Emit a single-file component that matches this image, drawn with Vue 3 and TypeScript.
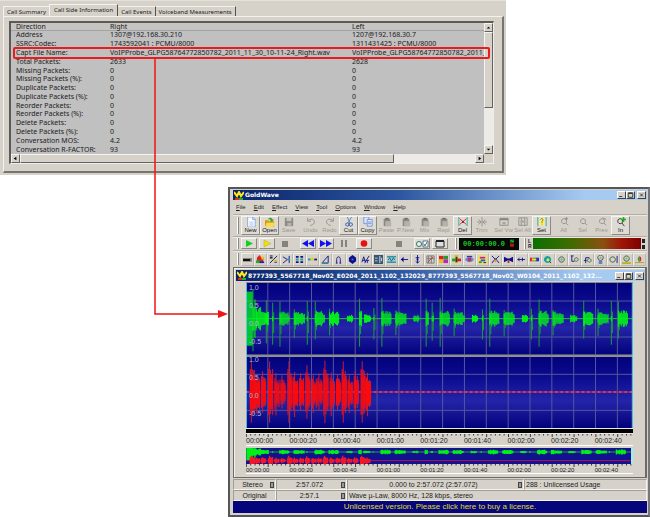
<script setup lang="ts">
type Shape = [d: string, color: string, kind?: 's']
interface Tool { label: string; on?: boolean; gap?: boolean; icon: Shape[] }
interface Burst { x: number; w: number; a: number; spike?: number; down?: number }

const tabs = ['Call Summary', 'Call Side Information', 'Call Events', 'Voiceband Measurements']
const file = 'VoIPProbe_GLPG58764772850782_2011_'
const rows: [string, string, string][] = [
  ['Address', '1307@192.168.30.210', '1207@192.168.30.7'],
  ['SSRC:Codec:', '1743592041 : PCMU/8000', '1311431425 : PCMU/8000'],
  ['Capt File Name:', file + '11_30_10-11-24_Right.wav', file],
  ['Total Packets:', '2633', '2628'],
  ['Missing Packets:', '0', '0'],
  ['Missing Packets (%):', '0', '0'],
  ['Duplicate Packets:', '0', '0'],
  ['Duplicate Packets (%):', '0', '0'],
  ['Reorder Packets:', '0', '0'],
  ['Reorder Packets (%):', '0', '0'],
  ['Delete Packets:', '0', '0'],
  ['Delete Packets (%):', '0', '0'],
  ['Conversation MOS:', '4.2', '4.2'],
  ['Conversation R-FACTOR:', '93', '93'],
]

const menus = ['File', 'Edit', 'Effect', 'View', 'Tool', 'Options', 'Window', 'Help']

const G = '#8c8a85'
const clip: Shape[] = [['M2 2h8v9H2z', G], ['M4 1h4v2H4z', '#6f6d69'], ['M4 5h7v6H4z', '#b5b2ab']]
const lens: Shape[] = [['M6 2a3 3 0 1 0 .1 0zM8 7l3 3', G, 's']]
const tools: Tool[] = [
  { label: 'New', on: true, icon: [['M2 0h6l3 3v9H2z', '#fff'], ['M2 0h6l3 3v9H2zM8 0v3h3', '#7f9fd8', 's'], ['M4 5h5v6H4z', '#cfe0ff']] },
  { label: 'Open', on: true, icon: [['M0 4h4l1 1h6v7H0z', '#d79a10'], ['M2 7h10l-2 5H0z', '#ffd94a'], ['M3 3c2-3 5-3 6 0h2L8 6 5 3h2c-1-1-2-1-4 0z', '#2faa2f']] },
  { label: 'Save', icon: [['M1 1h10v10H1z', G], ['M3 1h6v4H3z', '#c4c1ba'], ['M4 7h5v4H4z', '#b5b2ab']] },
  { label: 'Undo', gap: true, icon: [['M2 1v4h4M2 5c3-4 9-3 8 2-1 2-3 3-5 3', G, 's']] },
  { label: 'Redo', icon: [['M10 1v4H6M10 5C7 1 1 2 2 7c1 2 3 3 5 3', G, 's']] },
  { label: 'Cut', on: true, icon: [['M4 0l3 7M9 0L5 7', '#4b78b8', 's'], ['M4 7a2 2 0 1 0 .1 0zM8 7a2 2 0 1 0 .1 0z', '#123a9c', 's']] },
  { label: 'Copy', on: true, icon: [['M1 0h6v8H1z', '#dbe7ff'], ['M1 0h6v8H1z', '#6b8bd0', 's'], ['M5 3h6v8H5z', '#dbe7ff'], ['M5 3h6v8H5zM6 6h4M6 8h4', '#6b8bd0', 's']] },
  { label: 'Paste', icon: clip },
  { label: 'P.New', icon: clip },
  { label: 'Mix', icon: clip },
  { label: 'Repl', icon: clip },
  { label: 'Del', on: true, icon: [['M1 0v11M11 0v11', '#1aa7a0', 's'], ['M2 2l8 7M10 2L2 9', '#c01818', 's'], ['M5 5h2v2H5z', '#7a0000']] },
  { label: 'Trim', icon: [['M6 0v11M0 6h5M12 6H7M2 3l3 3-3 3M10 3L7 6l3 3', G, 's']] },
  { label: 'Sel Vw', gap: true, icon: [['M1 2h10v8H1z', G, 's'], ['M1 1h10v3H1z', G], ['M4 6h4v3H4z', '#aaa7a0']] },
  { label: 'Sel All', icon: [['M1 1h10v9H1zM4 1v9M8 1v9', G, 's'], ['M3 4h6v3H3z', '#aaa7a0']] },
  { label: 'Set', on: true, icon: [['M1 0v11M11 0v11', '#1aa7a0', 's'], ['M3 1h6v9H3z', '#ffef6a'], ['M4 3c1-2 4-1 3 1L6 5v2M6 8v1', '#5b6a10', 's']] },
  { label: 'All', gap: true, icon: [...lens, ['M7 2h4M9 0v4', G, 's']] },
  { label: 'Sel', icon: lens },
  { label: 'Prev', icon: [...lens, ['M7 1l4 2', G, 's']] },
  { label: 'In', on: true, icon: [['M5 2a3 3 0 1 0 .1 0zM7 7l3 4', '#222', 's'], ['M8 0h2v2h2v2h-2v2H8V4H6V2h2z', '#18b018']] },
]

const B = '#10108c'
const effects: Shape[][] = [
  [['M0 4h10v3H0z', '#111'], ['M8 5h2v1H8z', '#fff']],
  [['M1 3l3-3 2 3 3 1-2 5H1z', '#e02020'], ['M0 6h5v3H0z', '#20b020'], ['M6 2h3v3H6z', '#e8c020'], ['M4 7h5v2H4z', '#2020c0']],
  [['M1 9l8-8M1 1h3M6 8h3', B, 's'], ['M5 5h4v2H5z', '#d8c820'], ['M1 2h3v2H1z', '#333']],
  [['M1 2l5 3-5 4M8 1v8', B, 's'], ['M6 4h3v2H6z', '#20a0a0']],
  [['M1 1h3v2H1zM1 7h3v2H1zM6 1h3v2H6zM6 7h3v2H6z', B], ['M1 4h3v2H1zM6 4h3v2H6z', '#20a090']],
  [['M0 4h3v2H0z', '#1090c0'], ['M3 3h4v3H3z', '#e0d020'], ['M7 4h3v2H7z', B]],
  [['M1 9l7-8v8z', B, 's'], ['M1 8h8v1H1z', '#20a090']],
  [['M3 9V5c0-4 4-4 4 0v4M2 9h2M6 9h2', B, 's']],
  [['M5 0l4 3v4L5 10 1 7V3z', B], ['M4 4h2v2H4z', '#3a78d0']],
  [['M1 8l2-6 2 6M2 6h3M9 1L4 9M6 6h3M7 6v3', B, 's']],
  [['M0 0h10v10H0z', '#37566f'], ['M1 3h3v1H1zM1 6h3v1H1zM6 1h1v8H6zM8 3h1v4H8z', '#dce8f4']],
  [['M0 1h10v8H0z', '#8fd6cd'], ['M0 2h10M0 8h10M1 5h1l1-2 2 4 2-4 1 2h1', '#1d5f8c', 's']],
  [['M1 5h8', B, 's'], ['M4 2L1 5l3 3z', B]],
  [['M5 0v9M3 7l2 2 2-2M3 3h4', B, 's'], ['M4 4h2v2H4z', B]],
  [['M1 1h8v8H1zM3 1v8M6 1v8M1 4h8', '#777', 's'], ['M2 8l6-6', '#d03030', 's']],
  [['M0 1h5v4H0z', '#e02020'], ['M5 1h5v4H5z', '#20a020'], ['M0 5h5v4H0z', '#e0c020'], ['M5 5h5v4H5z', '#c020c0']],
  [['M3 0h4v9H3z', '#e0c020'], ['M0 4h4v3H0z', '#20a020'], ['M6 4h4v3H6z', '#d02020'], ['M4 2h2v6H4z', '#333']],
  [['M0 5c2-4 8-4 10 0-2 4-8 4-10 0z', '#6a8fd8'], ['M3 3h4v4H3z', '#c03060'], ['M2 1h6v1H2z', B]],
  [['M0 0h10v10H0z', '#f0e060'], ['M2 2h6v2H2z', '#c020c0'], ['M3 5h5v2H3z', '#1060d0'], ['M1 7h3v2H1z', '#20a020'], ['M6 8h3v1H6z', B]],
  [['M1 1l4 4 4-4M1 9l4-5 4 5', B, 's'], ['M4 5h2v3H4z', '#e0a020']],
  [['M0 2l4 2h2l4-2v6L6 6H4L0 8z', B], ['M4 6h2v3H4z', '#c03030']],
  [['M1 5h8M3 3L1 5l2 2M6 3v4', B, 's']],
  [['M0 3h3v4H0z', '#e02020'], ['M3 3h3v4H3z', '#20b040'], ['M6 3h4v4H6z', '#2030d0'], ['M2 4h5v2H2z', '#f0e020']],
  [['M5 1a4 4 0 1 0 .1 0z', '#18a0a0'], ['M4 4h3v3H4z', '#e0e840'], ['M7 7l2 2', '#222', 's']],
  [['M5 2a3 3 0 1 0 .1 0z', '#36593a', 's'], ['M4 4h2v2H4z', '#58a868']],
  [['M1 1h3M2 1v6h3', B, 's'], ['M7 3a2 2 0 1 0 .1 0z', '#386a38', 's']],
  [['M3 9V3h4M1 6h3', B, 's'], ['M7 4a2 2 0 1 0 .1 0z', '#386a38', 's']],
  [['M5 0a3 3 0 1 0 .1 0z', '#445', 's'], ['M3 6h4v4H3z', '#6a80b8'], ['M4 2h2v2H4z', '#68b878']],
  [['M4 2a3 3 0 1 0 .1 0z', '#36593a', 's'], ['M9 1v8', B, 's']],
  [['M5 1a3 3 0 1 0 .1 0z', '#36593a', 's'], ['M0 8h10v2H0z', '#c0b020'], ['M4 3h2v2H4z', '#68b878']],
  [['M5 1a4 4 0 0 0 0 7z', '#20b040'], ['M5 1a4 4 0 0 1 0 7z', '#e02020'], ['M0 8h10v1H0z', '#a8a020']],
]

const greenBursts: Burst[] = [
  { x: 58, w: 17, a: 81 }, { x: 76, w: 10, a: 60, spike: 88, down: 98 }, { x: 86, w: 20, a: 36 }, { x: 108, w: 14, a: 22 },
  { x: 116, w: 8, a: 20, spike: 55, down: 74 }, { x: 135, w: 3, a: 8, spike: 48, down: 78 }, { x: 157, w: 30, a: 24, spike: 52, down: 84 },
  { x: 200, w: 31, a: 22, spike: 28, down: 58 }, { x: 239, w: 3, a: 10, spike: 53, down: 78 }, { x: 263, w: 28, a: 24, spike: 52, down: 62 },
  { x: 306, w: 30, a: 22, spike: 30, down: 50 }, { x: 360, w: 16, a: 12 }, { x: 396, w: 9, a: 28, spike: 60, down: 84 },
  { x: 411, w: 20, a: 14 }, { x: 439, w: 3, a: 8, spike: 32, down: 62 }, { x: 463, w: 30, a: 24, spike: 62, down: 84 },
  { x: 505, w: 33, a: 22, spike: 25, down: 50 }, { x: 559, w: 18, a: 12 }, { x: 596, w: 8, a: 24, spike: 60, down: 84 },
  { x: 614, w: 4, a: 12, spike: 48, down: 66 }, { x: 638, w: 30, a: 24, spike: 62, down: 84 }, { x: 680, w: 32, a: 22, spike: 30, down: 52 },
  { x: 735, w: 18, a: 12 }, { x: 765, w: 3, a: 8, spike: 28, down: 62 }, { x: 787, w: 30, a: 24, spike: 60, down: 84 },
  { x: 830, w: 32, a: 22, spike: 26, down: 52 }, { x: 885, w: 16, a: 12 }, { x: 912, w: 3, a: 8, spike: 30, down: 62 },
  { x: 935, w: 29, a: 24, spike: 58, down: 84 }, { x: 977, w: 32, a: 22, spike: 26, down: 50 }, { x: 1030, w: 20, a: 12 },
  { x: 1069, w: 29, a: 26, spike: 54, down: 60 }, { x: 1112, w: 33, a: 22, spike: 30, down: 52 }, { x: 1152, w: 3, a: 8, spike: 54, down: 78 },
  { x: 1173, w: 30, a: 26, spike: 52, down: 60 },
]
const redPeaks: [number, number][] = [
  [68, 92], [84, 52], [102, 62], [123, 92], [142, 56], [160, 50], [181, 92], [198, 60], [216, 56], [235, 80],
  [254, 50], [271, 56], [289, 94], [308, 58], [327, 54], [344, 92], [362, 50], [380, 64], [401, 92], [417, 58],
]

const rand = (n: number): number => Math.abs(Math.sin(n * 12.9898) * 43758.5453) % 1
const bar = (x: number, top: number, bottom: number): string => `M${x} ${top.toFixed(1)}V${bottom.toFixed(1)}`

function greenBody(): string {
  const out: string[] = []
  for (const b of greenBursts) {
    for (let i = 0; i < b.w; i += 3) {
      const solid = b.a > 70
      const fade = solid ? 1 : (0.55 + 0.45 * rand(b.x + i)) * (i > b.w * 0.8 ? 0.7 : 1)
      out.push(bar(b.x + i + 1, 117 - b.a * fade, 117 + b.a * fade))
    }
  }
  return out.join('')
}
function greenSpikes(): string {
  return greenBursts.filter(b => b.spike)
    .map(b => bar(b.x + 1, 117 - (b.spike ?? 0), 117 + (b.down ?? 0)) + bar(b.x + 4, 117 - (b.spike ?? 0) * 0.4, 117 + (b.down ?? 0) * 0.55))
    .join('')
}
function redBars(scale: number, shift: number): string {
  const out: string[] = []
  redPeaks.forEach(([x, a], n) => {
    for (let i = 0; i < 15; i += 3) {
      const k = (i === shift ? 1 : 0.5 + 0.3 * rand(x + i)) * scale
      out.push(bar(x + i + 1, 337 - a * k, 337 + a * k * (n % 3 === 1 ? 1.25 : 1)))
    }
  })
  return out.join('')
}
const green = greenBody()
const spikes = greenSpikes()
const redWide = redBars(1, 3)
const redCore = redBars(0.75, 0)
const gridX = Array.from({ length: 17 }, (_, i) => 121.5 + i * 65.6)
const ticks = Array.from({ length: 89 }, (_, i) => 1 + i * 13.12)
const times = ['00:00:00', '00:00:20', '00:00:40', '00:01:00', '00:01:20', '00:01:40', '00:02:00', '00:02:20', '00:02:40']
const levels = ['1.0', '0.5', '0.0', '-0.5', '1.0', '0.5', '0.0', '-0.5']
</script>

<template>
  <main class="page">
    <section class="panel">
      <nav class="tabs">
        <button v-for="(t, i) in tabs" :key="t" class="tab" :class="{ active: i === 1 }">{{ t }}</button>
      </nav>
      <div class="sheet">
        <div class="list">
          <div class="rows">
            <table>
              <thead>
                <tr><th class="c1">Direction</th><th class="c2">Right</th><th>Left</th></tr>
              </thead>
              <tbody>
                <tr v-for="r in rows" :key="r[0]"><td>{{ r[0] }}</td><td>{{ r[1] }}</td><td>{{ r[2] }}</td></tr>
              </tbody>
            </table>
          </div>
          <div class="vbar">
            <button class="sb" aria-label="Scroll up"><svg viewBox="0 0 8 8"><path d="M2 5h4L4 3z" /></svg></button>
            <div class="vthumb"></div>
            <button class="sb end" aria-label="Scroll down"><svg viewBox="0 0 8 8"><path d="M2 3h4L4 5z" /></svg></button>
          </div>
          <div class="hbar">
            <button class="sb" aria-label="Scroll left"><svg viewBox="0 0 8 8"><path d="M5 2v4L2 4z" /></svg></button>
            <div class="hthumb"></div>
            <button class="sb end" aria-label="Scroll right"><svg viewBox="0 0 8 8"><path d="M3 2v4l3-2z" /></svg></button>
          </div>
          <div class="corner"></div>
        </div>
      </div>
      <div class="mark"></div>
    </section>

    <svg class="arrow" viewBox="0 0 75 262" aria-hidden="true">
      <path d="M1 0V257H66" fill="none" stroke="#f01414" stroke-width="1.5" />
      <path d="M64 253l10 4-10 4z" fill="#f01414" />
    </svg>

    <section class="window">
      <header class="title">
        <svg class="logo" viewBox="0 0 10 9"><path d="M0 1l3 4 2-4 2 4 3-4" fill="none" stroke="#ffe818" stroke-width="2" /><path d="M1 7h4v2H1z" fill="#e02818" /><path d="M5 7h4v2H5z" fill="#20b030" /></svg>
        <h1>GoldWave</h1>
        <span class="wbtns">
          <button aria-label="Minimize"><svg viewBox="0 0 8 8"><path d="M1 6h4" /></svg></button>
          <button aria-label="Maximize"><svg viewBox="0 0 8 8"><path d="M1 2h6v5H1zM1 1h6" /></svg></button>
          <button class="x" aria-label="Close"><svg viewBox="0 0 8 8"><path d="M2 2l4 4M6 2L2 6" /></svg></button>
        </span>
      </header>
      <nav class="menu">
        <button v-for="m in menus" :key="m"><u>{{ m[0] }}</u>{{ m.slice(1) }}</button>
      </nav>
      <div class="bar tools">
        <i class="grip"></i>
        <button v-for="t in tools" :key="t.label" class="tool" :class="{ on: t.on, gap: t.gap }">
          <svg viewBox="0 0 12 12"><path v-for="(s, i) in t.icon" :key="i" :d="s[0]" :fill="s[2] ? 'none' : s[1]" :stroke="s[2] ? s[1] : 'none'" /></svg>
          <span>{{ t.label }}</span>
        </button>
      </div>
      <div class="bar transport">
        <i class="grip"></i>
        <button class="tb on" aria-label="Play"><svg viewBox="0 0 14 9"><path d="M4 1l7 3.500L4 8z" fill="#10d020" /></svg></button>
        <button class="tb on" aria-label="Play selection"><svg viewBox="0 0 14 9"><path d="M4 1l7 3.500L4 8z" fill="#f0e010" stroke="#b8a820" stroke-width=".5" /></svg></button>
        <button class="tb" aria-label="Stop"><svg viewBox="0 0 14 9"><path d="M4 2h6v6H4z" fill="#85837e" /></svg></button>
        <button class="tb on gap" aria-label="Rewind"><svg viewBox="0 0 14 9"><path d="M7 1v7L1 4.500zM13 1v7L7 4.500z" fill="#1010f0" /></svg></button>
        <button class="tb on" aria-label="Fast forward"><svg viewBox="0 0 14 9"><path d="M1 1v7l6-3.500zM7 1v7l6-3.500z" fill="#1010f0" /></svg></button>
        <button class="tb" aria-label="Pause"><svg viewBox="0 0 14 9"><path d="M4 1h2v7H4zM8 1h2v7H8z" fill="#85837e" /></svg></button>
        <button class="tb on rec" aria-label="Record"><svg viewBox="0 0 14 9"><circle cx="7" cy="4.500" r="3.300" fill="#e81010" /></svg></button>
        <button class="tb far" aria-label="Stop recording"><svg viewBox="0 0 14 9"><path d="M4 2h6v6H4z" fill="#85837e" /></svg></button>
        <button class="tb on gap" aria-label="Options"><svg viewBox="0 0 14 9"><circle cx="4" cy="5" r="2.500" fill="#eef" stroke="#2a7a58" /><path d="M8 2h5v6H8z" fill="#fff" stroke="#338" stroke-width=".7" /><path d="M9 5l1 2 2-4" fill="none" stroke="#1a9a2a" /></svg></button>
        <button class="tb on" aria-label="Window layout"><svg viewBox="0 0 14 9"><path d="M3 2h8v6H3z" fill="#ddd" stroke="#222" /><path d="M3 1h8v2H3z" fill="#222" /></svg></button>
        <i class="grip wide"></i>
        <output class="led">00:00:00.0<svg viewBox="0 0 5 10"><path d="M0 0h5v4H0z" fill="#147a20" /><path d="M0 5h5v4H0z" fill="#b01818" /><path d="M1 1h1v1H1zM3 2h1v1H3z" fill="#20e040" /></svg></output>
        <i class="grip wide"></i>
        <span class="lr"><b>L</b><b>R</b></span>
        <div class="meter"></div>
        <span class="clips"><i></i><i></i></span>
      </div>
      <div class="bar effects">
        <i class="grip"></i>
        <button v-for="(e, n) in effects" :key="n" class="fx" :aria-label="'Effect ' + (n + 1)">
          <svg viewBox="0 0 10 10"><path v-for="(s, i) in e" :key="i" :d="s[0]" :fill="s[2] ? 'none' : s[1]" :stroke="s[2] ? s[1] : 'none'" /></svg>
        </button>
      </div>

      <article class="child">
        <header class="title sub">
          <svg class="logo" viewBox="0 0 10 9"><path d="M0 1l3 4 2-4 2 4 3-4" fill="none" stroke="#ffe818" stroke-width="2" /><path d="M1 7h4v2H1z" fill="#e02818" /><path d="M5 7h4v2H5z" fill="#20b030" /></svg>
          <h2>8777393_5567718_Nov02_E0204_2011_1102_132029_8777393_5567718_Nov02_W0104_2011_1102_132...</h2>
          <span class="wbtns">
            <button aria-label="Minimize"><svg viewBox="0 0 8 8"><path d="M1 6h4" /></svg></button>
            <button aria-label="Maximize"><svg viewBox="0 0 8 8"><path d="M1 2h6v5H1zM1 1h6" /></svg></button>
            <button class="x" aria-label="Close"><svg viewBox="0 0 8 8"><path d="M2 2l4 4M6 2L2 6" /></svg></button>
          </span>
        </header>
        <div class="content">
          <div class="wave">
            <svg viewBox="56 10 1162 435" preserveAspectRatio="none">
              <defs>
                <linearGradient id="pane" x1="0" y1="0" x2="0" y2="1">
                  <stop offset="0" stop-color="#02027c" /><stop offset=".3" stop-color="#0c0c90" />
                  <stop offset=".62" stop-color="#2424a8" /><stop offset="1" stop-color="#02027c" />
                </linearGradient>
              </defs>
              <path d="M56 10h1162v215H56z" fill="url(#pane)" />
              <path d="M56 231h1162v214H56z" fill="url(#pane)" />
              <path v-for="x in gridX" :key="x" :d="`M${x} 10V445`" class="grid" />
              <path d="M56 64H1218M56 172H1218M56 284H1218M56 392H1218" class="grid" />
              <path d="M56 228H1218" stroke="#8d8d85" stroke-width="6" />
              <path d="M56 117H1218" stroke="#1fc23a" stroke-width="3" />
              <path :d="spikes" stroke="#17a035" stroke-width="3" />
              <path :d="green" stroke="#00fa14" stroke-width="3" />
              <path d="M56 337H1218" stroke="#c41a4c" stroke-width="4" />
              <path d="M56 337H1218" stroke="#d8a0b8" stroke-width="2" stroke-dasharray="8 8" />
              <path :d="redWide" stroke="#d01c30" stroke-width="3" />
              <path :d="redCore" stroke="#ff0a0a" stroke-width="3" />
              <path d="M57 10V445M1216 10V445" stroke="#5fdcec" stroke-width="3" />
            </svg>
            <div class="levels"><span v-for="(l, i) in levels" :key="i">{{ l }}</span></div>
          </div>
          <div class="black"></div>
          <div class="ruler">
            <svg viewBox="0 0 1162 10" preserveAspectRatio="none"><path v-for="(t, i) in ticks" :key="i" :d="`M${t} 0V${i % 5 ? 5 : 10}`" stroke="#333" stroke-width="3" /></svg>
            <div class="times"><span v-for="t in times" :key="t">{{ t }}</span></div>
          </div>
          <div class="overview">
            <svg viewBox="56 0 1162 48" preserveAspectRatio="none">
              <path d="M56 0h1162v48H56z" fill="#12128e" />
              <path d="M56 12H1218" stroke="#1fa23a" stroke-width="3" />
              <g transform="translate(0 -23) scale(1 .3)">
                <path :d="green" stroke="#00f018" stroke-width="4" />
              </g>
              <path d="M56 38H1218" stroke="#b01858" stroke-width="3" />
              <g transform="translate(0 -16) scale(1 .16)">
                <path :d="redWide" stroke="#f01828" stroke-width="4" />
              </g>
            </svg>
          </div>
          <div class="ruler small">
            <svg viewBox="0 0 1162 10" preserveAspectRatio="none"><path v-for="(t, i) in ticks" :key="i" :d="`M${t} 0V${i % 5 ? 5 : 10}`" stroke="#333" stroke-width="3" /></svg>
            <div class="times"><span v-for="t in times" :key="t">{{ t }}</span></div>
          </div>
        </div>
      </article>

      <footer class="status">
        <div class="cell mid"><span>Stereo</span><i class="chip"></i></div>
        <div class="cell mid"><span>2:57.072</span><i class="chip"></i></div>
        <div class="cell mid"><span>0.000 to 2:57.072 (2:57.072)</span><i class="chip"></i></div>
        <div class="cell">288 : Unlicensed Usage</div>
        <div class="cell mid"><span>Original</span></div>
        <div class="cell mid"><span>2:57.1</span><i class="chip"></i></div>
        <div class="cell wide">Wave µ-Law, 8000 Hz, 128 kbps, stereo</div>
      </footer>
      <a class="banner" href="#">Unlicensed version. Please click here to buy a license.</a>
    </section>
  </main>
</template>

<style>
body { background: #fff; }
</style>

<style scoped>
* { box-sizing: border-box; }
button { font: inherit; color: inherit; border: 0; padding: 0; margin: 0; background: none; }
svg { display: block; }
.page { position: relative; font-family: "Liberation Sans", Arial, sans-serif; font-size: 7px; color: #1c1c1c; overflow: hidden; }

/* Call details panel */
.panel { position: relative; margin-right: 144px; background: #d6d2ca; padding: 3px 2px 2px 3px; font-family: "Noto Sans", sans-serif; border-top: 1px solid #e4e1db; }
.tabs { display: flex; align-items: flex-end; height: 12px; font-size: 6px; }
.tab { height: 10px; line-height: 10px; padding: 0 3px; border-top: 1px solid #f4f2ee; border-right: 1px solid #55534f; white-space: nowrap; }
.tab:first-child { border-left: 1px solid #f4f2ee; border-right: 0; }
.tab.active { height: 12px; border-left: 1px solid #f4f2ee; padding: 0 4px 2px; }
.sheet { border: 1px solid #f4f2ee; border-right: 2px solid #77746f; border-bottom: 2px solid #77746f; padding: 4px 8px 7px 5px; }
.list { display: grid; grid-template-columns: 1fr 9px; grid-template-rows: auto 9px; border: 2px solid #5c5a57; border-right-color: #f0eeea; border-bottom-color: #f0eeea; border-right-width: 1px; border-bottom-width: 1px; background: #c0c0c0; }
.rows { min-width: 0; }
table { width: 100%; height: 131px; border-collapse: collapse; table-layout: fixed; line-height: 8px; }
th, td { padding: 0 0 0 5px; text-align: left; font-weight: 400; white-space: nowrap; }
th { box-shadow: inset 0 -1px #a2a2a2; background: #c6c5c2; }
.c1 { width: 94px; }
.c2 { width: 242px; }
.vbar, .hbar { display: flex; background: #edebe8; }
.vbar { flex-direction: column; }
.sb { width: 9px; height: 9px; flex: none; background: #d6d2ca; border: 1px solid; border-color: #f6f4f0 #64625e #64625e #f6f4f0; }
.sb svg { width: 7px; height: 7px; }
.sb.end { margin-top: auto; }
.hbar .sb.end { margin: 0 0 0 auto; }
.vthumb { height: 76px; background: #d6d2ca; border: 1px solid; border-color: #f6f4f0 #64625e #64625e #f6f4f0; }
.hthumb { width: 79%; background: #d6d2ca; border: 1px solid; border-color: #f6f4f0 #64625e #64625e #f6f4f0; }
.corner { background: #d6d2ca; }
.mark { position: absolute; left: 13px; right: 16px; top: 46px; height: 12px; border: 2px solid #e81c1c; border-radius: 2px; }
.arrow { position: absolute; left: 154px; top: 57px; width: 75px; height: 262px; z-index: 2; }

/* Editor window */
.window { margin: 12px 0 0 228px; background: #d6d2ca; border: 2px solid #55555a; border-right-color: #77777a; padding: 1px 1px 2px 3px; }
.title { display: flex; align-items: center; height: 10px; background: linear-gradient(90deg, #0a246a, #2c56a0 40%, #a6caf0 85%); color: #fff; padding: 0 1px; gap: 1px; }
.title h1, .title h2 { margin: 0; font-family: "DejaVu Sans", sans-serif; font-size: 6px; line-height: 10px; font-weight: 700; flex: 1; white-space: nowrap; }
.logo { width: 10px; height: 9px; flex: none; }
.wbtns { display: flex; flex: none; }
.wbtns button { width: 9px; height: 8px; background: #d6d2ca; border: 1px solid; border-color: #fff #404040 #404040 #fff; }
.wbtns .x { margin-left: 2px; }
.wbtns svg { width: 7px; height: 6px; }
.wbtns path { fill: none; stroke: #111; }
.menu { display: flex; gap: 8px; padding: 0 3px; height: 14px; align-items: center; font-size: 6px; }
.bar { display: flex; align-items: center; border-top: 1px solid #b0ada6; box-shadow: inset 0 1px #ece9e4; padding: 0 1px 0 4px; }
.grip { width: 2px; height: 80%; margin-right: 2px; border-left: 1px solid #fff; border-right: 1px solid #8c8984; flex: none; }
.grip.wide { margin: 0 2px 0 5px; }
.tools { height: 22px; }
.tool { width: 19px; height: 19px; flex: none; display: flex; flex-direction: column; align-items: center; color: #9b9892; font-size: 6px; line-height: 7px; white-space: nowrap; border: 1px solid transparent; }
.tool svg { width: 10px; height: 10px; flex: none; }
.tool.on, .tb.on { border: 1px solid; border-color: #f6f4f0 #8c8984 #8c8984 #f6f4f0; background: #dedbd4; }
.tool.on { color: #111; }
.tool.gap { margin-left: 3px; }
.transport { height: 14px; }
.tb { width: 16px; height: 11px; margin-right: 2px; flex: none; border: 1px solid transparent; }
.tb svg { width: 14px; height: 9px; }
.tb.gap { margin-left: 5px; }
.tb.far { margin-left: 17px; }
.tb.rec { margin-left: 2px; }
.led { display: flex; align-items: center; justify-content: space-between; width: 60px; height: 12px; padding: 0 5px 0 4px; background: #050805; color: #16c828; font: 700 7px/12px "Liberation Mono", monospace; flex: none; }
.led svg { width: 4px; height: 9px; }
.lr { display: flex; flex-direction: column; font-size: 5px; line-height: 5px; margin-right: 1px; }
.meter { flex: 1; height: 11px; background: linear-gradient(90deg, #0a7000, #3f6c00 35%, #8a5010 65%, #a01408 82%, #7c0000); }
.clips { display: flex; flex-direction: column; gap: 2px; padding: 0 1px; }
.clips i { width: 3px; height: 4px; background: #222; }
.effects { height: 17px; }
.fx { flex: 1 1 0; height: 13px; display: flex; align-items: center; justify-content: center; border: 1px solid; border-color: #f0eeea #bab7b0 #bab7b0 #f0eeea; }
.fx svg { width: 9px; height: 9px; flex: none; }

/* Sound document */
.child { border: 1px solid #6c6a66; border-right-width: 2px; box-shadow: inset 1px 1px #f4f2ee; padding: 2px 0 3px 2px; }
.sub { height: 11px; }
.content { padding: 1px 12px 0 10px; }
.wave { position: relative; border-top: 1px solid #8d8d85; }
.wave svg { width: 100%; height: 145px; }
.grid { fill: none; stroke: #55559f; stroke-width: 3; }
.levels { position: absolute; top: 0; left: 3px; display: grid; grid-auto-rows: 10px; row-gap: 8px; line-height: 10px; color: #b4b4d2; }
.black { height: 6px; background: #000; border-top: 1px solid #e8e8e8; border-bottom: 1px solid #e8e8e8; }
.ruler { height: 12px; border-bottom: 1px solid #fff; }
.ruler svg { width: 100%; height: 3px; }
.times { display: grid; grid-template-columns: repeat(8, 100fr) 88fr; line-height: 8px; }
.times span { min-width: 0; white-space: nowrap; }
.small { height: 10px; font-size: 6px; }
.small .times { line-height: 7px; }
.overview { margin-top: 2px; border-right: 2px solid #9af0f0; }
.overview svg { width: 100%; height: 16px; }

/* Status bar */
.status { display: grid; grid-template-columns: 43fr 71fr 177fr 123fr; grid-auto-rows: 11px; padding-top: 1px; }
.cell { display: flex; align-items: center; min-width: 0; padding: 0 1px; white-space: nowrap; border: 1px solid; border-color: #a09d96 #f6f4f0 #f6f4f0 #a09d96; }
.mid span { flex: 1; text-align: center; }
.wide { grid-column: span 2; }
.chip { width: 4px; height: 6px; border: 1px solid #444; background: #999; }
.banner { display: block; height: 12px; line-height: 11px; text-align: center; font-size: 8px; color: #e0dc28; background: #06067c; text-decoration: none; }
</style>
